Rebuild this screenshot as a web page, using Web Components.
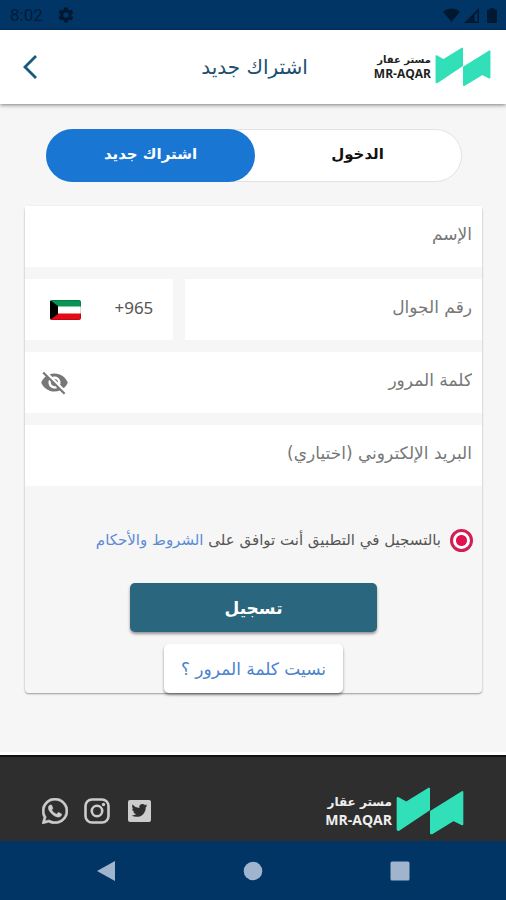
<!DOCTYPE html>
<html lang="ar" dir="rtl">
<head>
<meta charset="utf-8">
<meta name="viewport" content="width=device-width, initial-scale=1">
<title>اشتراك جديد</title>
<style>
  body { margin: 0; background: #f6f6f6; color: #444; font-family: "DejaVu Sans", sans-serif; font-size: 16px; }
</style>
</head>
<body>
<signup-page></signup-page>
<script>
const define = (name, html, setup) => customElements.define(name, class extends HTMLElement {
  constructor() {
    super();
    const t = document.createElement('template');
    t.innerHTML = html;
    this.attachShadow({ mode: 'open' }).append(t.content.cloneNode(true));
  }
  connectedCallback() { if (setup) setup(this, this.shadowRoot); }
});

define('status-bar', `
<style>
  :host { display: flex; direction: ltr; align-items: center; height: 30px; padding: 0 9px 0 10px; background: #003566; color: #001c3a; font: 17px/30px Roboto, sans-serif; box-sizing: border-box; }
  .gear { margin-inline-start: 14px; }
  .end { display: flex; align-items: center; gap: 4px; margin-inline-start: auto; }
  .battery { margin-inline-start: 4px; }
  svg { display: block; fill: #001830; }
</style>
<span>8:02</span>
<svg class="gear" width="18" height="18" viewBox="0 0 24 24" aria-hidden="true"><path d="M19.4 13c0-.3.1-.6.1-1s0-.7-.1-1l2.100-1.600a.5.5 0 0 0 .1-.6l-2-3.500a.5.5 0 0 0-.6-.2l-2.500 1a7 7 0 0 0-1.700-1l-.4-2.600a.5.5 0 0 0-.5-.5h-4a.5.5 0 0 0-.5.5L9 5.100a7 7 0 0 0-1.700 1l-2.500-1a.5.5 0 0 0-.6.2l-2 3.500a.5.5 0 0 0 .1.6L4.500 11a8 8 0 0 0 0 2l-2.100 1.600a.5.5 0 0 0-.1.6l2 3.500c.1.200.4.300.6.200l2.500-1a7 7 0 0 0 1.700 1l.4 2.600c0 .3.2.5.5.5h4c.3 0 .5-.2.5-.5l.4-2.600a7 7 0 0 0 1.700-1l2.500 1c.2.1.5 0 .6-.2l2-3.500a.5.5 0 0 0-.1-.6zM12 15.600a3.600 3.600 0 1 1 0-7.200 3.600 3.600 0 0 1 0 7.200z"/></svg>
<div class="end">
  <svg width="17" height="15" viewBox="0 0 17 15" aria-hidden="true"><path d="M8.500 14 0 3.500Q8.500-2.500 17 3.500z"/></svg>
  <svg width="15" height="15" viewBox="0 0 15 15" aria-hidden="true"><path fill-rule="evenodd" d="M0 15 15 0v15zM10.500 13.500h3v-9.500l-3 3z"/></svg>
  <svg class="battery" width="10" height="15" viewBox="0 0 10 15" aria-hidden="true"><path d="M3 0h4v1.500h2q1 0 1 1V14q0 1-1 1H1q-1 0-1-1V2.500q0-1 1-1h2z"/></svg>
</div>`);

define('brand-logo', `
<style>
  :host { display: inline-flex; align-items: center; gap: 4px; color: #222; font-size: 10px; line-height: 14px; font-weight: 700; --mark: 56px; --latin: 12px; }
  :host([large]) { color: #eee; font-size: 12px; line-height: 17px; --mark: 68px; --latin: 14px; }
  svg { width: var(--mark); height: auto; display: block; }
  .words { display: flex; flex-direction: column; }
  .latin { font-family: "Open Sans", sans-serif; font-size: var(--latin); direction: ltr; }
</style>
<svg viewBox="0 0 204 144" aria-hidden="true"><g transform="translate(2 2)" fill="#31dfb8" stroke="#31dfb8" stroke-width="6" stroke-linejoin="round"><path d="M3 31 29 45 97 3v63L6 127l-3-1z"/><path d="M103 72 197 13v97l-26-13-66 40h-2z"/></g></svg>
<span class="words"><span>مستر عقار</span><span class="latin">MR-AQAR</span></span>`);

define('app-header', `
<style>
  :host { display: grid; grid-template-columns: 1fr auto 1fr; align-items: center; min-height: 74px; padding: 0 15px 0 18px; background: #fff; box-shadow: 0 1px 4px rgba(0,0,0,.5); position: relative; box-sizing: border-box; }
  h1 { margin: 0; font-size: 20px; line-height: 28px; font-weight: 500; color: #1d4e70; }
  button { justify-self: end; border: 0; background: none; padding: 0; width: 24px; height: 32px; cursor: pointer; }
  svg { display: block; }
</style>
<brand-logo></brand-logo>
<h1><slot></slot></h1>
<button type="button" aria-label="رجوع"><svg width="24" height="32" viewBox="0 0 24 32" fill="none" stroke="#17597a" stroke-width="2.800"><path d="M18 5 7 16l11 11"/></svg></button>`);

define('mode-tabs', `
<style>
  :host { display: flex; height: 53px; border: 1px solid #e2e2e2; border-radius: 27px; background: #fff; box-sizing: border-box; }
  button { flex: 1; margin: -1px; padding: 0 0 4px; border: 0; border-radius: 27px; background: none; color: #111; font: 700 15px/24px "DejaVu Sans", sans-serif; cursor: pointer; }
  button[aria-selected="true"] { background: #1976d3; color: #fff; }
</style>
<button type="button" role="tab" aria-selected="false">الدخول</button>
<button type="button" role="tab" aria-selected="true">اشتراك جديد</button>`,
(host) => host.setAttribute('role', 'tablist'));

define('text-field', `
<style>
  :host { display: flex; align-items: center; height: 61px; background: #fff; box-sizing: border-box; }
  input { flex: 1; min-width: 0; height: 100%; box-sizing: border-box; border: 0; outline: 0; background: none; padding: 0 10px 6px; color: #333; font: 17px/28px "DejaVu Sans", sans-serif; }
  input::placeholder { color: #777; opacity: 1; }
</style>
<input dir="rtl"><slot></slot>`,
(host, root) => {
  const input = root.querySelector('input');
  input.type = host.getAttribute('type') || 'text';
  input.placeholder = host.getAttribute('label');
  input.setAttribute('aria-label', host.getAttribute('label'));
});

define('reveal-button', `
<style>
  :host { display: block; margin-inline-end: 15px; }
  button { display: block; border: 0; padding: 0; background: none; cursor: pointer; }
  svg { display: block; fill: #777; }
</style>
<button type="button" aria-label="إظهار كلمة المرور"><svg width="29" height="29" viewBox="0 0 24 24"><path d="M12 7c2.760 0 5 2.240 5 5 0 .65-.13 1.260-.36 1.830l2.920 2.920c1.510-1.260 2.700-2.890 3.430-4.750-1.730-4.390-6-7.500-11-7.500-1.400 0-2.740.25-3.980.7l2.160 2.160C10.740 7.130 11.350 7 12 7zM2 4.270l2.280 2.280.46.46C3.080 8.300 1.780 10.020 1 12c1.730 4.390 6 7.500 11 7.500 1.550 0 3.030-.3 4.380-.84l.42.42L19.730 22 21 20.730 3.270 3 2 4.270zM7.530 9.800l1.550 1.550c-.05.21-.08.43-.08.65 0 1.660 1.340 3 3 3 .22 0 .44-.03.65-.08l1.550 1.550c-.67.33-1.410.53-2.200.53-2.760 0-5-2.240-5-5 0-.79.2-1.530.53-2.200zm4.310-.78 3.150 3.150.02-.16c0-1.660-1.340-3-3-3l-.17.01z"/></svg></button>`);

define('country-code', `
<style>
  :host { display: block; }
  button { width: 100%; height: 100%; display: flex; direction: ltr; align-items: center; justify-content: space-between; border: 0; background: #fff; padding: 0 20px 4px 25px; color: #555; font: 17px/28px "Noto Sans", sans-serif; cursor: pointer; }
  svg { display: block; margin-top: 4px; }
</style>
<button type="button"><svg width="31" height="20" viewBox="0 0 31 20" role="img" aria-label="الكويت"><defs><clipPath id="r"><rect width="31" height="20" rx="2"/></clipPath></defs><g clip-path="url(#r)"><path fill="#fff" d="M0 0h31v20H0z"/><path fill="#079457" d="M0 0h31v6.500H0z"/><path fill="#e20a17" d="M0 13.500h31V20H0z"/><path d="M0 0 8 6v8l-8 6z"/></g><rect x=".5" y=".5" width="30" height="19" rx="2" fill="none" stroke="#000" stroke-opacity=".15"/></svg><span>+965</span></button>`);

define('terms-choice', `
<style>
  :host { display: block; font-size: 15px; line-height: 24px; color: #555; }
  label { display: flex; align-items: center; gap: 9px; }
  input { appearance: none; flex: none; margin: 0; width: 23px; height: 23px; border: 3px solid #cf1f55; border-radius: 50%; background: radial-gradient(circle, #e0134f 5px, #fff 6px); }
  a { color: #5b8bd4; text-decoration: none; }
</style>
<label><input type="radio" checked><span>بالتسجيل في التطبيق أنت توافق على <a href="#terms">الشروط والأحكام</a></span></label>`);

define('push-button', `
<style>
  :host { display: block; }
  button { width: 100%; height: 49px; border: 0; border-radius: 5px; padding: 0 17px; background: #2a667e; color: #fff; font: 700 17px/28px "DejaVu Sans", sans-serif; box-shadow: 0 2px 3px rgba(0,0,0,.4); white-space: nowrap; cursor: pointer; }
  :host([plain]) button { background: #fff; color: #4b82cd; font-weight: 400; }
</style>
<button type="button"><slot></slot></button>`);

define('signup-form', `
<style>
  :host { display: block; border-radius: 4px; box-shadow: 0 1px 2px rgba(0,0,0,.38); background: #f6f6f6; }
  form { display: flex; flex-direction: column; gap: 12px; }
  .phone { display: grid; grid-template-columns: 2fr 1fr; gap: 12px; }
  terms-choice { margin: 30px 9px 19px; }
  .actions { display: flex; flex-direction: column; align-items: center; gap: 12px; }
  .submit { width: 54%; }
</style>
<form>
  <text-field label="الإسم"></text-field>
  <div class="phone"><text-field label="رقم الجوال" type="tel"></text-field><country-code></country-code></div>
  <text-field label="كلمة المرور" type="password"><reveal-button></reveal-button></text-field>
  <text-field label="البريد الإلكتروني (اختياري)" type="email"></text-field>
  <terms-choice></terms-choice>
  <div class="actions">
    <push-button class="submit">تسجيل</push-button>
    <push-button plain>نسيت كلمة المرور ؟</push-button>
  </div>
</form>`);

define('app-footer', `
<style>
  :host { display: flex; align-items: center; justify-content: space-between; height: 89px; padding: 25px 42px 0; background: #2e2e2e; border-top: 3px solid #fff; box-shadow: inset 0 2px #111; box-sizing: border-box; }
  nav { display: flex; direction: ltr; gap: 16px; }
  a, svg { display: block; }
  svg { fill: #ccc; }
</style>
<brand-logo large></brand-logo>
<nav>
  <a href="#whatsapp" aria-label="WhatsApp"><svg width="26" height="26" viewBox="0 32 448 448"><path stroke="#ccc" stroke-width="10" d="M380.900 97.100C339 55.100 283.200 32 223.900 32c-122.400 0-222 99.600-222 222 0 39.100 10.200 77.300 29.600 111L0 480l117.700-30.900c32.400 17.700 68.900 27 106.100 27h.1c122.300 0 224.100-99.600 224.100-222 0-59.300-25.200-115-67.100-157zm-157 341.600c-33.200 0-65.700-8.900-94-25.700l-6.700-4-69.800 18.300L72 359.200l-4.400-7c-18.500-29.400-28.200-63.300-28.200-98.200 0-101.700 82.800-184.500 184.600-184.500 49.300 0 95.600 19.200 130.400 54.100 34.800 34.900 56.200 81.200 56.100 130.500 0 101.800-84.900 184.600-186.600 184.600zm101.200-138.200c-5.500-2.800-32.800-16.200-37.900-18-5.100-1.900-8.800-2.800-12.500 2.800-3.700 5.600-14.300 18-17.600 21.800-3.200 3.700-6.500 4.200-12 1.400-32.600-16.300-54-29.100-75.500-66-5.700-9.800 5.700-9.100 16.300-30.300 1.800-3.700.9-6.900-.5-9.700-1.400-2.800-12.500-30.100-17.100-41.200-4.500-10.800-9.100-9.300-12.500-9.500-3.200-.2-6.900-.2-10.600-.2-3.700 0-9.700 1.400-14.800 6.900-5.100 5.600-19.400 19-19.400 46.300 0 27.300 19.900 53.700 22.600 57.400 2.800 3.700 39.100 59.700 94.800 83.800 35.200 15.200 49 16.500 66.600 13.900 10.700-1.600 32.800-13.400 37.400-26.400 4.600-13 4.600-24.100 3.200-26.400-1.300-2.500-5-3.900-10.500-6.600z"/></svg></a>
  <a href="#instagram" aria-label="Instagram"><svg width="26" height="26" viewBox="0 0 26 26"><rect x="1.500" y="1.500" width="23" height="23" rx="6.500" fill="none" stroke="#ccc" stroke-width="2.600"/><circle cx="13" cy="13" r="5.200" fill="none" stroke="#ccc" stroke-width="2.600"/><circle cx="19.500" cy="6.500" r="1.700"/></svg></a>
  <a href="#twitter" aria-label="Twitter"><svg width="26" height="26" viewBox="0 0 26 26"><rect x="2" y="2" width="23" height="22" rx="2"/><g transform="translate(5.500 4.500) scale(.66)"><path fill="#2e2e2e" d="M23.950 4.570a10 10 0 0 1-2.820.77 4.960 4.960 0 0 0 2.160-2.720c-.95.55-2 .95-3.130 1.180a4.920 4.920 0 0 0-8.380 4.480C7.690 8.090 4.070 6.130 1.640 3.160a4.820 4.820 0 0 0-.67 2.480c0 1.710.87 3.210 2.190 4.100a4.900 4.900 0 0 1-2.230-.62v.06a4.920 4.920 0 0 0 3.950 4.830 5 5 0 0 1-2.210.08 4.940 4.940 0 0 0 4.600 3.420A9.870 9.870 0 0 1 0 19.540a14 14 0 0 0 7.550 2.210c9.050 0 14-7.500 14-13.980 0-.21 0-.42-.02-.63a9.900 9.900 0 0 0 2.420-2.570z"/></g></svg></a>
</nav>`);

define('system-nav', `
<style>
  :host { display: flex; direction: ltr; justify-content: space-evenly; align-items: center; height: 59px; background: #003566; }
  nav { display: grid; grid-template-columns: repeat(3, 1fr); width: 87%; justify-items: center; }
  button { border: 0; padding: 0; background: none; cursor: pointer; }
  svg { display: block; fill: #a0b4cd; }
</style>
<nav>
<button type="button" aria-label="السابق"><svg width="20" height="22" viewBox="0 0 20 22"><path d="M19 1v20L1 11z"/></svg></button>
<button type="button" aria-label="الرئيسية"><svg width="20" height="22" viewBox="0 0 20 22"><circle cx="10" cy="11" r="9.300"/></svg></button>
<button type="button" aria-label="التطبيقات"><svg width="20" height="22" viewBox="0 0 20 22"><rect x=".5" y="1.500" width="19" height="19" rx="1.500"/></svg></button>
</nav>`);

define('signup-page', `
<style>
  :host { display: flex; flex-direction: column; min-height: 100vh; }
  main { flex: 1; padding: 25px 24px 24px 25px; }
  mode-tabs { margin: 0 20px 24px 21px; }
</style>
<status-bar></status-bar>
<app-header>اشتراك جديد</app-header>
<main>
  <mode-tabs></mode-tabs>
  <signup-form></signup-form>
</main>
<app-footer></app-footer>
<system-nav></system-nav>`);
</script>
</body>
</html>
